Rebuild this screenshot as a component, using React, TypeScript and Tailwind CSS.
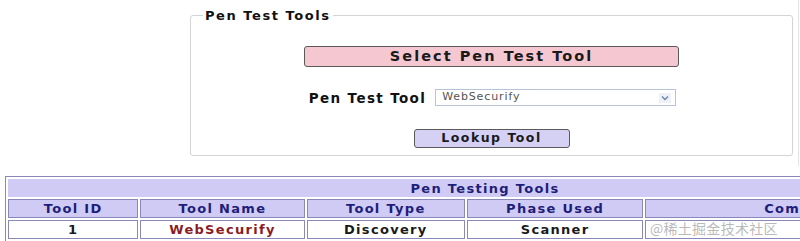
import React from 'react';

const COLUMNS = [
  { label: 'Tool ID', width: 'w-[130px]' },
  { label: 'Tool Name', width: 'w-[164px]' },
  { label: 'Tool Type', width: 'w-[158px]' },
  { label: 'Phase Used', width: 'w-[176px]' },
  { label: 'Comment', width: 'w-[316px]' },
];

const ROW = ['1', 'WebSecurify', 'Discovery', 'Scanner', ''];

export default function App() {
  return (
    <div className="w-[800px] h-[241px] overflow-hidden bg-white font-['DejaVu_Sans',sans-serif] relative">
      <div className="flex border-r border-[#e4e4e4] w-[799px] h-[166px]">
        <div className="pl-[190px] pt-[6px]">
          <fieldset className="w-[603px] h-[150px] border border-[#d4d4d4] rounded-[3px] px-0 pt-0">
            <legend className="ml-[12px] px-[2px] text-[13px] font-bold tracking-[0.12em] text-[#111]">
              Pen Test Tools
            </legend>
            <div className="flex flex-col items-center pt-[20px]">
              <button className="w-[375px] h-[21px] bg-[#f5c7d0] border border-[#5a5a5a] rounded-[3px] text-[14.5px] font-bold tracking-[0.14em] text-[#1a1a1a] leading-none">
                Select Pen Test Tool
              </button>
              <div className="flex items-center gap-[9px] mt-[21px] ml-[2px]">
                <span className="text-[13.5px] font-bold tracking-[0.1em] text-[#111]">Pen Test Tool</span>
                <div className="w-[241px] h-[17px] border border-[#b6c3d8] flex items-center justify-between pl-[6px] pr-[4px]">
                  <span className="text-[11px] text-[#555] tracking-[0.08em]">WebSecurify</span>
                  <svg width="12" height="10" viewBox="0 0 12 10">
                    <rect x="0" y="0" width="12" height="10" fill="#eef2f8" />
                    <path d="M3 3.5 L6 6.5 L9 3.5" stroke="#6e86b0" strokeWidth="1.5" fill="none" />
                  </svg>
                </div>
              </div>
              <button className="mt-[21px] w-[156px] h-[19px] bg-[#d5d1f5] border border-[#5a5a5a] rounded-[3px] text-[12.5px] font-bold tracking-[0.12em] text-[#1a1a1a] leading-none">
                Lookup Tool
              </button>
            </div>
          </fieldset>
        </div>
      </div>

      <div className="pl-[5px] pt-[10px]">
        <table className="border border-[#8a88b8] border-separate border-spacing-[2px] w-[960px]">
          <thead>
            <tr>
              <th
                colSpan={5}
                className="h-[18px] bg-[#cfcbf4] text-[13px] font-bold tracking-[0.1em] text-[#1e1e7a] text-center leading-none p-0"
              >
                Pen Testing Tools
              </th>
            </tr>
            <tr>
              {COLUMNS.map(c => (
                <th
                  key={c.label}
                  className={`${c.width} h-[19px] bg-[#cfcbf4] border border-[#8a88b8] text-[13px] font-bold tracking-[0.1em] text-[#1e1e7a] text-center leading-none p-0`}
                >
                  {c.label}
                </th>
              ))}
            </tr>
          </thead>
          <tbody>
            <tr>
              {ROW.map((v, i) => (
                <td
                  key={i}
                  className={`h-[19px] bg-white border border-[#8a88b8] text-[13px] font-bold tracking-[0.1em] text-center leading-none p-0 ${i === 1 ? 'text-[#8b1c24]' : 'text-[#1a1a1a]'}`}
                >
                  {v}
                </td>
              ))}
            </tr>
          </tbody>
        </table>
      </div>

      <div className="absolute left-[650px] top-[221px] text-[14px] text-[#9a9a9a]/70 font-['Noto_Sans_CJK_SC',sans-serif] leading-none tracking-[0.02em]">
        @稀土掘金技术社区
      </div>
    </div>
  );
}
